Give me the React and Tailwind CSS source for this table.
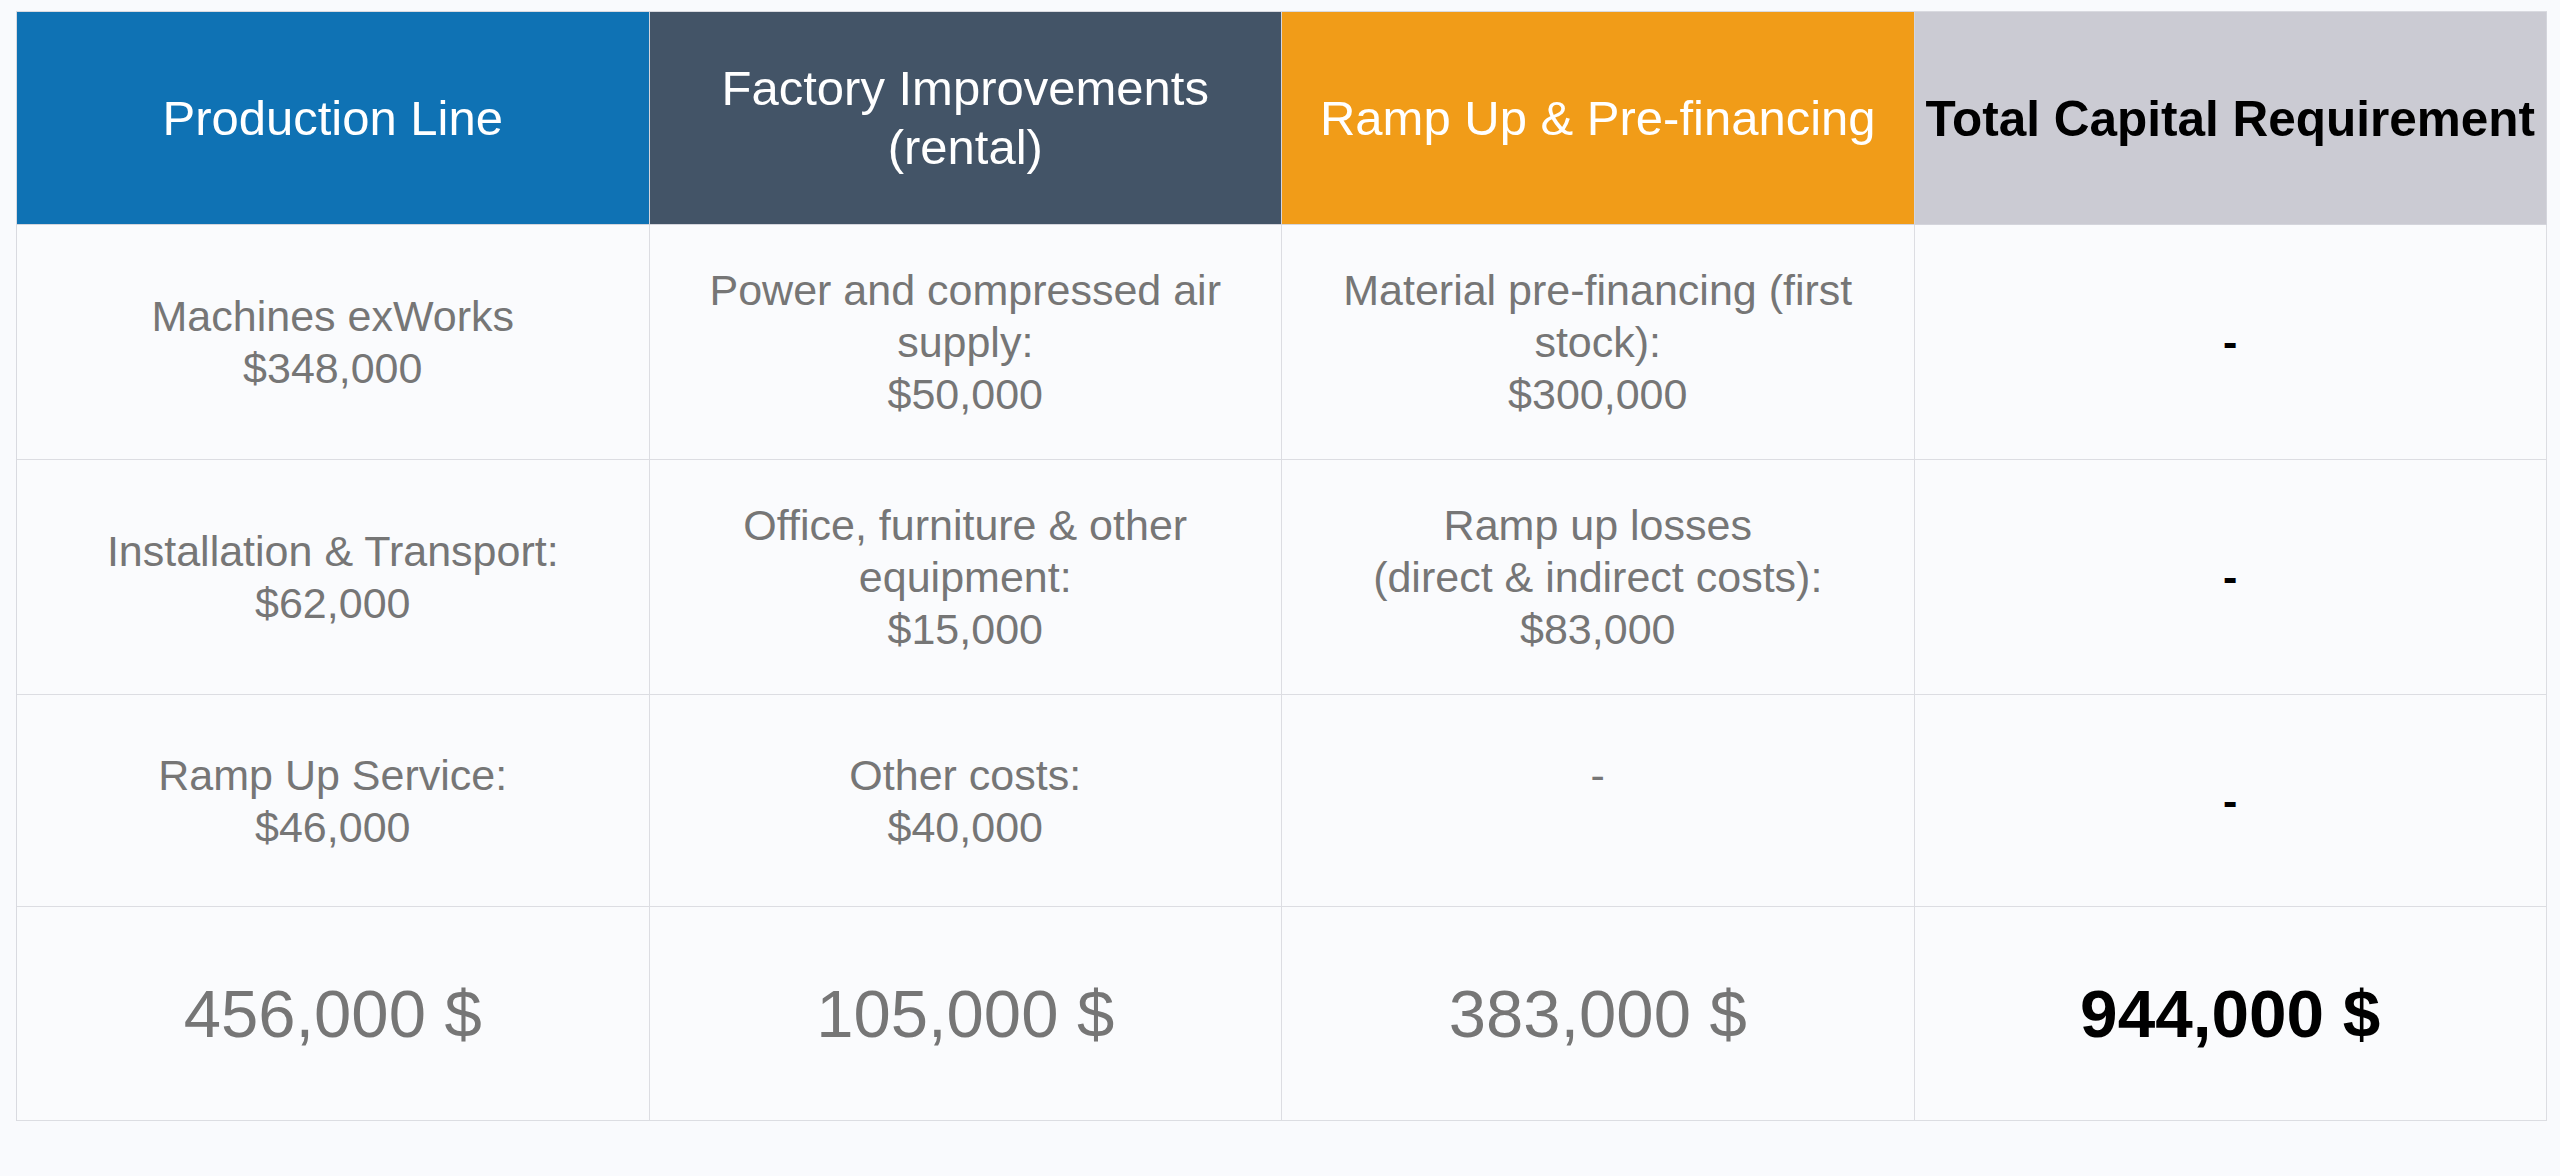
import { Fragment } from "react";

const HEADERS = [
  { lines: ["Production Line"], cls: "bg-[#0f72b4] text-white font-normal text-[49px]" },
  { lines: ["Factory Improvements", "(rental)"], cls: "bg-[#435467] text-white font-normal text-[49px]" },
  { lines: ["Ramp Up & Pre-financing"], cls: "bg-[#f19c18] text-white font-normal text-[49px]" },
  { lines: ["Total Capital Requirement"], cls: "bg-[#cbcbd3] text-black font-bold text-[49.5px]" },
];

const ROWS = [
  {
    h: "h-[235px]",
    cells: [
      ["Machines exWorks", "$348,000"],
      ["Power and compressed air", "supply:", "$50,000"],
      ["Material pre-financing (first", "stock):", "$300,000"],
    ],
  },
  {
    h: "h-[235px]",
    cells: [
      ["Installation & Transport:", "$62,000"],
      ["Office, furniture & other", "equipment:", "$15,000"],
      ["Ramp up losses", "(direct & indirect costs):", "$83,000"],
    ],
  },
  {
    h: "h-[212px]",
    cells: [
      ["Ramp Up Service:", "$46,000"],
      ["Other costs:", "$40,000"],
      ["-", "\u00a0"],
    ],
  },
];

const TOTALS = ["456,000 $", "105,000 $", "383,000 $"];

export default function App() {
  return (
    <div className="min-h-screen w-full bg-[#f9fafd] pt-[11px] pl-[16px]" style={{ fontFamily: '"Liberation Sans", Arial, sans-serif' }}>
      <div className="grid w-[2531px] grid-cols-4 border-l border-t border-[#d9dae0] bg-[#fafbfd]">
        {HEADERS.map((hd, i) => (
          <div key={i} className={`flex h-[213px] flex-col items-center justify-center border-r border-b border-[#d4d5dc] text-center leading-[59px] ${hd.cls}`}>
            {hd.lines.map((l, j) => (
              <div key={j} className="whitespace-nowrap">{l}</div>
            ))}
          </div>
        ))}

        {ROWS.map((row, r) => (
          <Fragment key={r}>
            {row.cells.map((cell, c) => (
              <div key={c} className={`flex ${row.h} flex-col items-center justify-center border-r border-b border-[#dcdde2] text-center text-[43px] leading-[52px] text-[#767676]`}>
                {cell.map((l, j) => (
                  <div key={j} className="whitespace-nowrap">{l}</div>
                ))}
              </div>
            ))}
            <div className={`flex ${row.h} items-center justify-center border-r border-b border-[#dcdde2] text-[43px] font-bold leading-[52px] text-black`}>
              -
            </div>
          </Fragment>
        ))}

        {TOTALS.map((t, i) => (
          <div key={`tot-${i}`} className="flex h-[214px] items-center justify-center border-r border-b border-[#dcdde2] text-[67px] leading-[80px] text-[#767676]">
            {t}
          </div>
        ))}
        <div className="flex h-[214px] items-center justify-center border-r border-b border-[#dcdde2] text-[67.5px] font-bold leading-[80px] text-black">
          944,000 $
        </div>
      </div>
    </div>
  );
}
